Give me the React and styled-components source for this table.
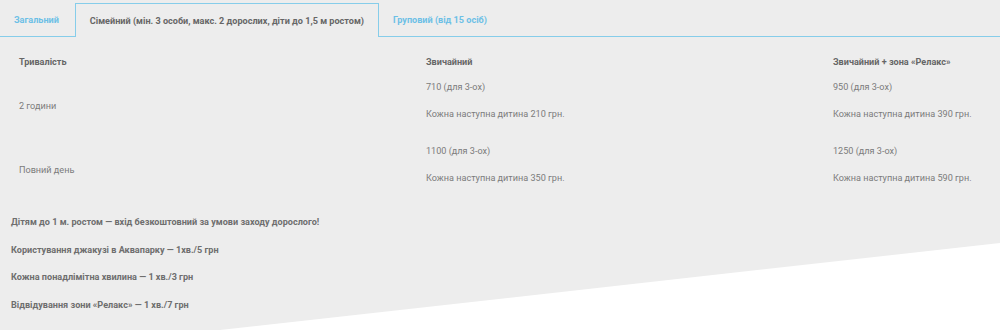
import React, { useState } from 'react'
import styled, { createGlobalStyle, css } from 'styled-components'

const accent = '#86cdea'
const bg = '#ededed'

const GlobalStyle = createGlobalStyle`
  body {
    margin: 0;
    background: ${bg};
    font-family: Roboto, "Liberation Sans", Arial, sans-serif;
  }
`

const Page = styled.div`
  position: relative;
  height: 330px;
  overflow: hidden;
  background: ${bg};
  &::after {
    content: '';
    position: absolute;
    left: 0;
    top: 0;
    right: 0;
    bottom: 0;
    background: #fff;
    clip-path: polygon(1000px 243px, 1000px 330px, 220px 330px);
    pointer-events: none;
  }
`

const TabBar = styled.div`
  display: flex;
  padding-top: 3px;
  border-bottom: 1px solid ${accent};
`

const Tab = styled.button`
  height: 33px;
  padding: 0 15px 0 13px;
  margin-bottom: -1px;
  border: 1px solid transparent;
  border-bottom: none;
  background: transparent;
  font-family: inherit;
  font-size: 9.1px;
  font-weight: 700;
  color: #6cc0e6;
  cursor: pointer;
  outline: none;
  ${p => p.active && css`
    padding: 0 14px;
    height: 34px;
    border-color: ${accent};
    background: ${bg};
    color: #666;
  `}
`

const Table = styled.div`
  display: grid;
  grid-template-columns: 407px 407px 1fr;
  margin: 13px 0 0 11px;
`

const Cell = styled.div`
  padding: ${p => (p.head ? '5px 8px' : '6px 8px')};
  display: flex;
  flex-direction: column;
  justify-content: ${p => (p.center ? 'center' : 'flex-start')};
  font-size: 9.1px;
  line-height: 14px;
  color: ${p => (p.head ? '#666' : '#7b7b7b')};
  font-weight: ${p => (p.head ? 700 : 400)};
`

const Line = styled.p`
  margin: 0 0 13px;
  &:last-child {
    margin-bottom: 11px;
  }
`

const Notes = styled.div`
  margin: 13px 0 0 11px;
`

const Note = styled.p`
  margin: 0 0 13.5px;
  font-size: 9.1px;
  line-height: 14px;
  font-weight: 700;
  color: #6e6e6e;
`

const tabs = [
  'Загальний',
  'Сімейний (мін. 3 особи, макс. 2 дорослих, діти до 1,5 м ростом)',
  'Груповий (від 15 осіб)'
]

const rows = [
  { name: '2 години', base: ['710 (для 3-ох)', 'Кожна наступна дитина 210 грн.'], relax: ['950 (для 3-ох)', 'Кожна наступна дитина 390 грн.'] },
  { name: 'Повний день', base: ['1100 (для 3-ох)', 'Кожна наступна дитина 350 грн.'], relax: ['1250 (для 3-ох)', 'Кожна наступна дитина 590 грн.'] }
]

const notes = [
  'Дітям до 1 м. ростом — вхід безкоштовний за умови заходу дорослого!',
  'Користування джакузі в Аквапарку — 1хв./5 грн',
  'Кожна понадлімітна хвилина — 1 хв./3 грн',
  'Відвідування зони «Релакс» — 1 хв./7 грн'
]

const App = () => {
  const [active, setActive] = useState(1)

  return (
    <Page>
      <GlobalStyle />
      <TabBar>
        {tabs.map((t, i) => (
          <Tab key={t} active={i === active} onClick={() => setActive(i)}>
            {t}
          </Tab>
        ))}
      </TabBar>

      <Table>
        <Cell head>Тривалість</Cell>
        <Cell head>Звичайний</Cell>
        <Cell head>Звичайний + зона «Релакс»</Cell>
        {rows.map(r => (
          <React.Fragment key={r.name}>
            <Cell center>{r.name}</Cell>
            <Cell>
              {r.base.map(l => <Line key={l}>{l}</Line>)}
            </Cell>
            <Cell>
              {r.relax.map(l => <Line key={l}>{l}</Line>)}
            </Cell>
          </React.Fragment>
        ))}
      </Table>

      <Notes>
        {notes.map(n => <Note key={n}>{n}</Note>)}
      </Notes>
    </Page>
  )
}

export default App
